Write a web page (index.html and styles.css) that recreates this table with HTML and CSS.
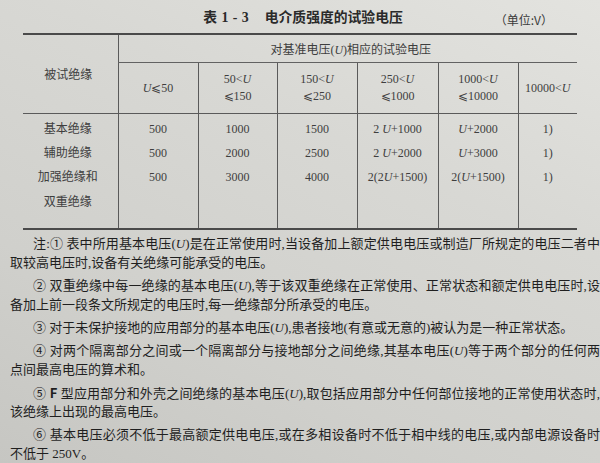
FILE: index.html
```
<!DOCTYPE html>
<html lang="zh-CN">
<head>
<meta charset="utf-8">
<title>表 1-3 电介质强度的试验电压</title>
<link rel="stylesheet" href="styles.css">
</head>
<body>
<div class="page">
  <div class="caption">
    <span class="spacer"></span>
    <h1 class="title"><span class="tno">表 1 - 3</span>电介质强度的试验电压</h1>
    <span class="unit">（单位:V）</span>
  </div>
  <table class="spec">
    <colgroup>
      <col class="c-label"><col class="c1"><col class="c2"><col class="c3"><col class="c4"><col class="c5"><col class="c6">
    </colgroup>
    <thead>
      <tr class="h-group">
        <th rowspan="2" class="label">被试绝缘</th>
        <th colspan="6" class="group">对基准电压(<i>U</i>)相应的试验电压</th>
      </tr>
      <tr class="h-range">
        <th><i>U</i>⩽50</th>
        <th>50&lt;<i>U</i><br>⩽150</th>
        <th>150&lt;<i>U</i><br>⩽250</th>
        <th>250&lt;<i>U</i><br>⩽1000</th>
        <th>1000&lt;<i>U</i><br>⩽10000</th>
        <th>10000&lt;<i>U</i></th>
      </tr>
    </thead>
    <tbody>
      <tr class="r-first">
        <td class="label">基本绝缘</td><td>500</td><td>1000</td><td>1500</td><td>2 <i>U</i>+1000</td><td><i>U</i>+2000</td><td>1)</td>
      </tr>
      <tr class="r-mid">
        <td class="label">辅助绝缘</td><td>500</td><td>2000</td><td>2500</td><td>2 <i>U</i>+2000</td><td><i>U</i>+3000</td><td>1)</td>
      </tr>
      <tr class="r-last">
        <td class="label two">加强绝缘和<br>双重绝缘</td><td>500</td><td>3000</td><td>4000</td><td>2(2<i>U</i>+1500)</td><td>2(<i>U</i>+1500)</td><td>1)</td>
      </tr>
    </tbody>
  </table>
  <div class="notes">
    <p class="note"><span class="ln full">注:① 表中所用基本电压(<i>U</i>)是在正常使用时,当设备加上额定供电电压或制造厂所规定的电压二者中</span><span class="ln">取较高电压时,设备有关绝缘可能承受的电压。</span></p>
    <p class="note"><span class="ln full">② 双重绝缘中每一绝缘的基本电压(<i>U</i>),等于该双重绝缘在正常使用、正常状态和额定供电电压时,设</span><span class="ln">备加上前一段条文所规定的电压时,每一绝缘部分所承受的电压。</span></p>
    <p class="note"><span class="ln first">③ 对于未保护接地的应用部分的基本电压(<i>U</i>),患者接地(有意或无意的)被认为是一种正常状态。</span></p>
    <p class="note"><span class="ln full">④ 对两个隔离部分之间或一个隔离部分与接地部分之间绝缘,其基本电压(<i>U</i>)等于两个部分的任何两</span><span class="ln">点间最高电压的算术和。</span></p>
    <p class="note"><span class="ln full">⑤ <b class="f">F</b> 型应用部分和外壳之间绝缘的基本电压(<i>U</i>),取包括应用部分中任何部位接地的正常使用状态时,</span><span class="ln">该绝缘上出现的最高电压。</span></p>
    <p class="note"><span class="ln full">⑥ 基本电压必须不低于最高额定供电电压,或在多相设备时不低于相中线的电压,或内部电源设备时</span><span class="ln">不低于 250V。</span></p>
  </div>
</div>
</body>
</html>
```
FILE: styles.css
```
html, body {
  margin: 0;
  padding: 0;
}
body {
  width: 600px;
  height: 463px;
  overflow: hidden;
  background: linear-gradient(205deg, #e3e3df 0%, #d8d8d4 35%, #d0d0cc 70%, #c6c6c2 100%);
  font-family: "Liberation Serif", "Noto Sans CJK SC", serif;
  color: #3e3e3e;
}
.page {
  width: 600px;
  height: 463px;
  padding-top: 8px;
  box-sizing: border-box;
}
.caption {
  display: grid;
  grid-template-columns: 1fr auto 1fr;
  align-items: center;
  width: 554px;
  margin-left: 23px;
  height: 20px;
}
.title {
  margin: 0 0 0 6px;
  font-family: "Liberation Serif", "Noto Sans CJK SC", serif;
  font-weight: 700;
  font-size: 13.8px;
  line-height: 20px;
  color: #2a2a2a;
  white-space: nowrap;
}
.tno {
  margin-right: 16px;
  word-spacing: 1px;
}
.unit {
  justify-self: end;
  margin-right: 24px;
  margin-top: 3px;
  font-size: 12px;
  font-family: "Noto Sans CJK SC", sans-serif;
  color: #3a3a3a;
  white-space: nowrap;
}
.spec {
  margin-top: 5px;
  margin-left: 23px;
  width: 554px;
  border-collapse: collapse;
  table-layout: fixed;
  font-size: 12px;
  border-top: 2px solid #4a4a4a;
  border-bottom: 2px solid #4a4a4a;
}
.c-label { width: 95px; }
.c1 { width: 80px; }
.c2 { width: 79px; }
.c3 { width: 80px; }
.c4 { width: 81px; }
.c5 { width: 80px; }
.c6 { width: 59px; }
.spec th, .spec td {
  padding: 0;
  text-align: center;
  font-weight: 400;
  border-left: 1px solid #5a5a5a;
  white-space: nowrap;
}
.spec th:first-child, .spec td:first-child {
  border-left: none;
}
.spec .h-range th:first-child {
  border-left: 1px solid #5a5a5a;
}
.h-group th {
  height: 27px;
  vertical-align: middle;
}
.h-group .group {
  border-bottom: 1px solid #626262;
  text-align: center;
  padding-left: 6px;
}
.h-group .label {
  padding-right: 4px;
  border-bottom: 1px solid #5a5a5a;
}
.h-range th {
  height: 50px;
  line-height: 17px;
  vertical-align: middle;
  border-bottom: 1px solid #5a5a5a;
}
.spec td {
  vertical-align: top;
  line-height: 24px;
}
.spec td.label {
  padding-right: 5px;
}
.r-first td {
  padding-top: 3px;
}
.r-last td {
  padding-bottom: 13px;
  height: 50px;
}
.spec td.two {
  line-height: 25px;
}
.notes {
  margin-top: 4px;
  margin-left: 10px;
  width: 590px;
  font-family: "Liberation Serif", "Noto Sans CJK SC", serif;
  font-size: 13px;
  line-height: 19.4px;
  color: #1f1f1f;
}
.note {
  margin: 0 0 3.3px 0;
}
.ln {
  display: block;
  height: 19.4px;
  white-space: nowrap;
}
.ln.full {
  padding-left: 23px;
  text-align: justify;
  text-align-last: justify;
}
.ln.first {
  padding-left: 23px;
}
.f {
  font-family: "Noto Sans CJK SC", sans-serif;
  font-weight: 700;
}
i {
  font-style: italic;
}
```
